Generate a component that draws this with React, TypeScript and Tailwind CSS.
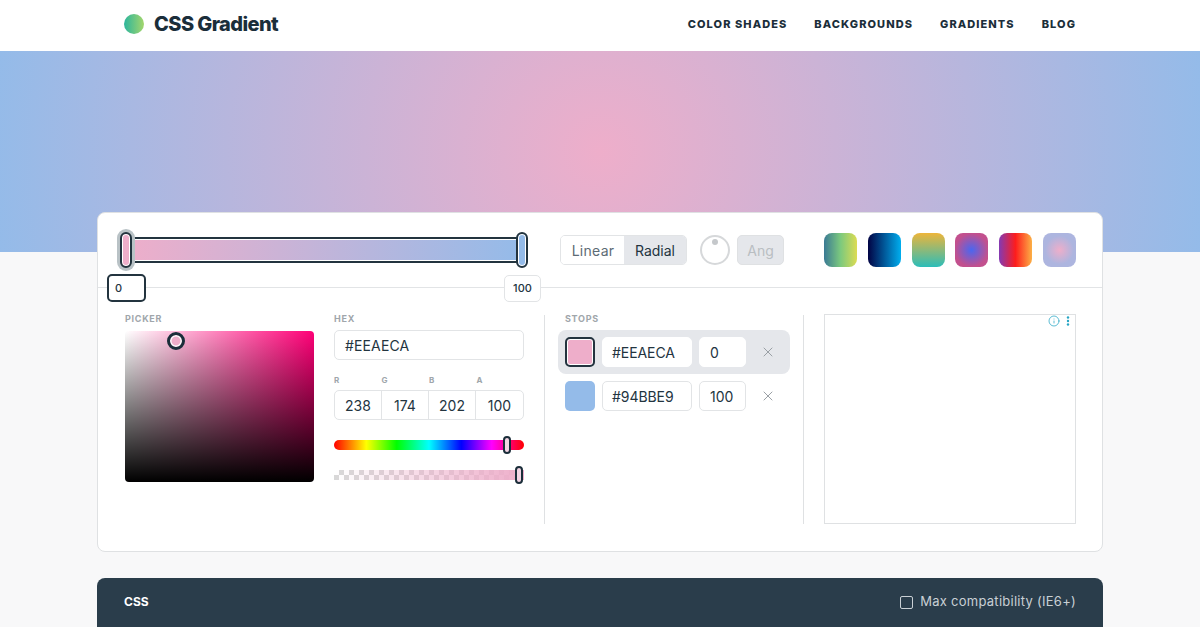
import { Info, X } from "lucide-react";
import React from "react";

const ink = "text-[#23343f]";

function Label({ children }: { children: React.ReactNode }) {
  return (
    <div className="h-4 text-[9px] leading-[7px] font-bold uppercase tracking-[0.08em] text-[#a0a6ab]">
      {children}
    </div>
  );
}

const swatches = [
  "bg-[linear-gradient(to_right,#3a7a94,#7cc97e,#dcdc52)]",
  "bg-[linear-gradient(to_right,#020344,#00aeef)]",
  "bg-[linear-gradient(to_bottom,#edb53a,#2bbdb9)]",
  "bg-[radial-gradient(circle,#4a66f0,#c2508e_70%)]",
  "bg-[linear-gradient(to_right,#833ab4,#fd1d1d,#fcb045)]",
  "bg-[radial-gradient(circle,#eeaeca,#adb5df_60%)]",
];

function Stop(props: { color: string; hex: string; pos: string; active?: boolean }) {
  const inputCls = props.active ? "border-white" : "border-[#e2e4e6]";
  return (
    <div
      className={
        "flex items-center h-[44px] pl-[7px] rounded-lg " + (props.active ? "bg-[#e5e7eb]" : "")
      }
    >
      <div
        className={
          "w-[30px] h-[30px] rounded-[5px] shrink-0 " +
          props.color +
          (props.active ? " border-2 border-[#23343f] shadow-[inset_0_0_0_1px_#fff]" : "")
        }
      />
      <div
        className={
          "ml-[7px] w-[90px] h-[30px] pl-[9px] flex items-center bg-white border rounded-[5px] text-[14px] tracking-[-0.005em] " +
          inputCls
        }
      >
        {props.hex}
      </div>
      <div
        className={
          "ml-[7px] w-[47px] h-[30px] pl-[10px] flex items-center bg-white border rounded-[5px] text-[14px] " +
          inputCls
        }
      >
        {props.pos}
      </div>
      <X className="ml-[14px] text-[#9aa0a5]" size={16} strokeWidth={1.5} />
    </div>
  );
}

export default function App() {
  return (
    <div className={"h-[627px] overflow-hidden bg-[#f8f8f9] font-['Inter',sans-serif] " + ink}>
      <header className="h-[51px] bg-white flex items-center justify-between pl-[124px] pr-[124px] pb-[3px]">
        <div className="flex items-center gap-[10px]">
          <div className="w-[20px] h-[20px] rounded-full bg-[linear-gradient(to_right,#2cb59c,#a3d66c)]" />
          <span className="text-[20px] font-extrabold tracking-[-0.03em] text-[#1b2e3a]">CSS Gradient</span>
        </div>
        <nav className="flex gap-[27px] text-[11px] font-extrabold tracking-[0.098em] text-[#1b2e3a]">
          <a>COLOR SHADES</a>
          <a>BACKGROUNDS</a>
          <a>GRADIENTS</a>
          <a>BLOG</a>
        </nav>
      </header>

      <div className="h-[201px] bg-[radial-gradient(circle,#eeaeca_0%,#94bbe9_100%)]" />

      <main className="w-[1006px] mx-auto -mt-[40px] relative">
        <section className="bg-white border border-[#dfe1e3] rounded-lg h-[340px]">
          {/* top controls */}
          <div className="h-[75px] border-b border-[#e2e4e6] flex items-start pl-[22px] pt-[18px] relative">
            <div className="w-[408px] h-[36px] mt-[1px] relative shrink-0">
              <div className="absolute left-[4px] right-[4px] top-[5px] h-[26px] border-2 border-[#23343f] shadow-[inset_0_0_0_1px_#fff] bg-[linear-gradient(to_right,#eeaeca,#94bbe9)]" />
              <div className="absolute left-0 top-0 w-[12px] h-[36px] rounded-full border-2 border-[#23343f] bg-[#eeaeca] shadow-[0_0_0_3px_#b9c2c6,inset_0_0_0_1px_#fff]" />
              <div className="absolute right-0 top-0 w-[12px] h-[36px] rounded-full border-2 border-[#23343f] bg-[#94bbe9] shadow-[inset_0_0_0_1px_#fff]" />
            </div>

            <div className="ml-[32px] flex h-[30px] mt-[4px] w-[127px] rounded-[5px] border border-[#e2e4e6] overflow-hidden text-[14px] shrink-0">
              <div className="w-[63px] pl-[1px] flex items-center justify-center tracking-[0.02em] text-[#5d6b75] bg-white">Linear</div>
              <div className="flex-1 flex items-center justify-center bg-[#e5e7eb]">Radial</div>
            </div>

            <div className="ml-[13px] mt-[4px] w-[30px] h-[30px] rounded-full border-2 border-[#d6d8da] relative shrink-0">
              <div className="absolute left-[10px] top-[2px] w-[6px] h-[6px] rounded-full bg-[#c5c8cb]" />
            </div>

            <div className="ml-[7px] mt-[4px] w-[47px] h-[30px] rounded-[5px] bg-[#e5e7eb] border border-[#dfe1e3] text-[14px] text-[#b9bec2] flex items-center justify-center shrink-0">
              Ang
            </div>

            <div className="ml-[40px] mt-[2px] w-[252px] flex justify-between shrink-0">
              {swatches.map((s) => (
                <div key={s} className={"w-[33px] h-[34px] rounded-lg " + s} />
              ))}
            </div>

            <div className="absolute left-[9px] top-[61px] w-[39px] h-[28px] pl-[6px] flex items-center rounded-[5px] bg-white border-2 border-[#23343f] text-[11px] font-medium">
              0
            </div>
            <div className="absolute left-[406px] top-[62px] w-[37px] h-[27px] flex items-center justify-center rounded-[5px] bg-white border border-[#e2e4e6] text-[11px] font-medium">
              100
            </div>
          </div>

          {/* picker, stops, ad */}
          <div className="flex pl-[27px] pt-[27px] h-[236px]">
            <div className="w-[189px] shrink-0">
              <Label>Picker</Label>
              <div className="w-[189px] h-[151px] rounded-[4px] relative bg-[linear-gradient(to_top,#000,transparent),linear-gradient(to_right,#fff,#ff0077)]">
                <div className="absolute left-[42px] top-[1px] w-[18px] h-[18px] rounded-full border-[3px] border-[#1b2e3a] bg-[#eeaeca] shadow-[inset_0_0_0_1.5px_#fff]" />
              </div>
            </div>

            <div className="w-[190px] ml-[20px] shrink-0">
              <Label>Hex</Label>
              <div className="h-[30px] -mt-[1px] pl-[10px] flex items-center border border-[#e2e4e6] rounded-[5px] text-[14px] tracking-[0.01em]">
                #EEAECA
              </div>
              <div className="grid grid-cols-4 mt-[16px] h-[14px] leading-[9px] text-[8px] font-bold text-[#a0a6ab]">
                <span>R</span>
                <span>G</span>
                <span>B</span>
                <span>A</span>
              </div>
              <div className="grid grid-cols-4 h-[30px] border border-[#e2e4e6] rounded-[5px] text-[14px] divide-x divide-[#e2e4e6]">
                <span className="flex items-center justify-center">238</span>
                <span className="flex items-center justify-center">174</span>
                <span className="flex items-center justify-center">202</span>
                <span className="flex items-center justify-center">100</span>
              </div>
              <div className="relative mt-[20px] h-[10px] rounded-full bg-[linear-gradient(to_right,#f00,#ff0_17%,#0f0_33%,#0ff_50%,#00f_67%,#f0f_83%,#f00)]">
                <div className="absolute left-[169px] -top-[4px] w-[8px] h-[18px] rounded-full border-2 border-[#1b2e3a] bg-[#f3d5e4]" />
              </div>
              <div className="relative mt-[20px] h-[10px] bg-[linear-gradient(to_right,transparent,#eeaeca),repeating-conic-gradient(#d8d8d8_0_25%,#fff_0_50%)] bg-[length:100%_100%,10px_10px]">
                <div className="absolute left-[181px] -top-[4px] w-[8px] h-[18px] rounded-full border-2 border-[#1b2e3a] bg-[#f3d5e4]" />
              </div>
            </div>

            <div className="ml-[20px] w-[259px] h-[209px] border-l border-[#dfe1e3] pl-[13px] shrink-0">
              <div className="pl-[7px]">
                <Label>Stops</Label>
              </div>
              <div className="w-[232px] -mt-[1px] flex flex-col">
                <Stop color="bg-[#eeaeca]" hex="#EEAECA" pos="0" active />
                <Stop color="bg-[#94bbe9]" hex="#94BBE9" pos="100" />
              </div>
            </div>

            <div className="h-[209px] border-l border-[#dfe1e3] pl-[20px] shrink-0">
              <div className="w-[252px] h-[210px] -mt-[1px] border border-[#dfe1e3] relative">
                <div className="absolute right-0 top-0 h-[12px] flex items-center gap-[6px] pr-[5px] bg-white text-[#27a5c4]">
                  <Info size={12} strokeWidth={1.5} />
                  <svg width="4" height="10" viewBox="0 0 4 10" fill="currentColor">
                    <circle cx="2" cy="1.5" r="1.2" />
                    <circle cx="2" cy="5" r="1.2" />
                    <circle cx="2" cy="8.5" r="1.2" />
                  </svg>
                </div>
              </div>
            </div>
          </div>
        </section>

        <section className="mt-[26px] h-[60px] rounded-t-lg bg-[#2a3d4b] flex items-center justify-between pl-[27px] pr-[27px] pb-[12px]">
          <span className="text-white text-[12px] font-bold">CSS</span>
          <div className="flex items-center gap-[7px] text-[#c9d0d5] text-[13px] tracking-[0.02em]">
            <div className="w-[13px] h-[13px] rounded-[2px] border border-[#c9d0d5]" />
            Max compatibility (IE6+)
          </div>
        </section>
      </main>
    </div>
  );
}
